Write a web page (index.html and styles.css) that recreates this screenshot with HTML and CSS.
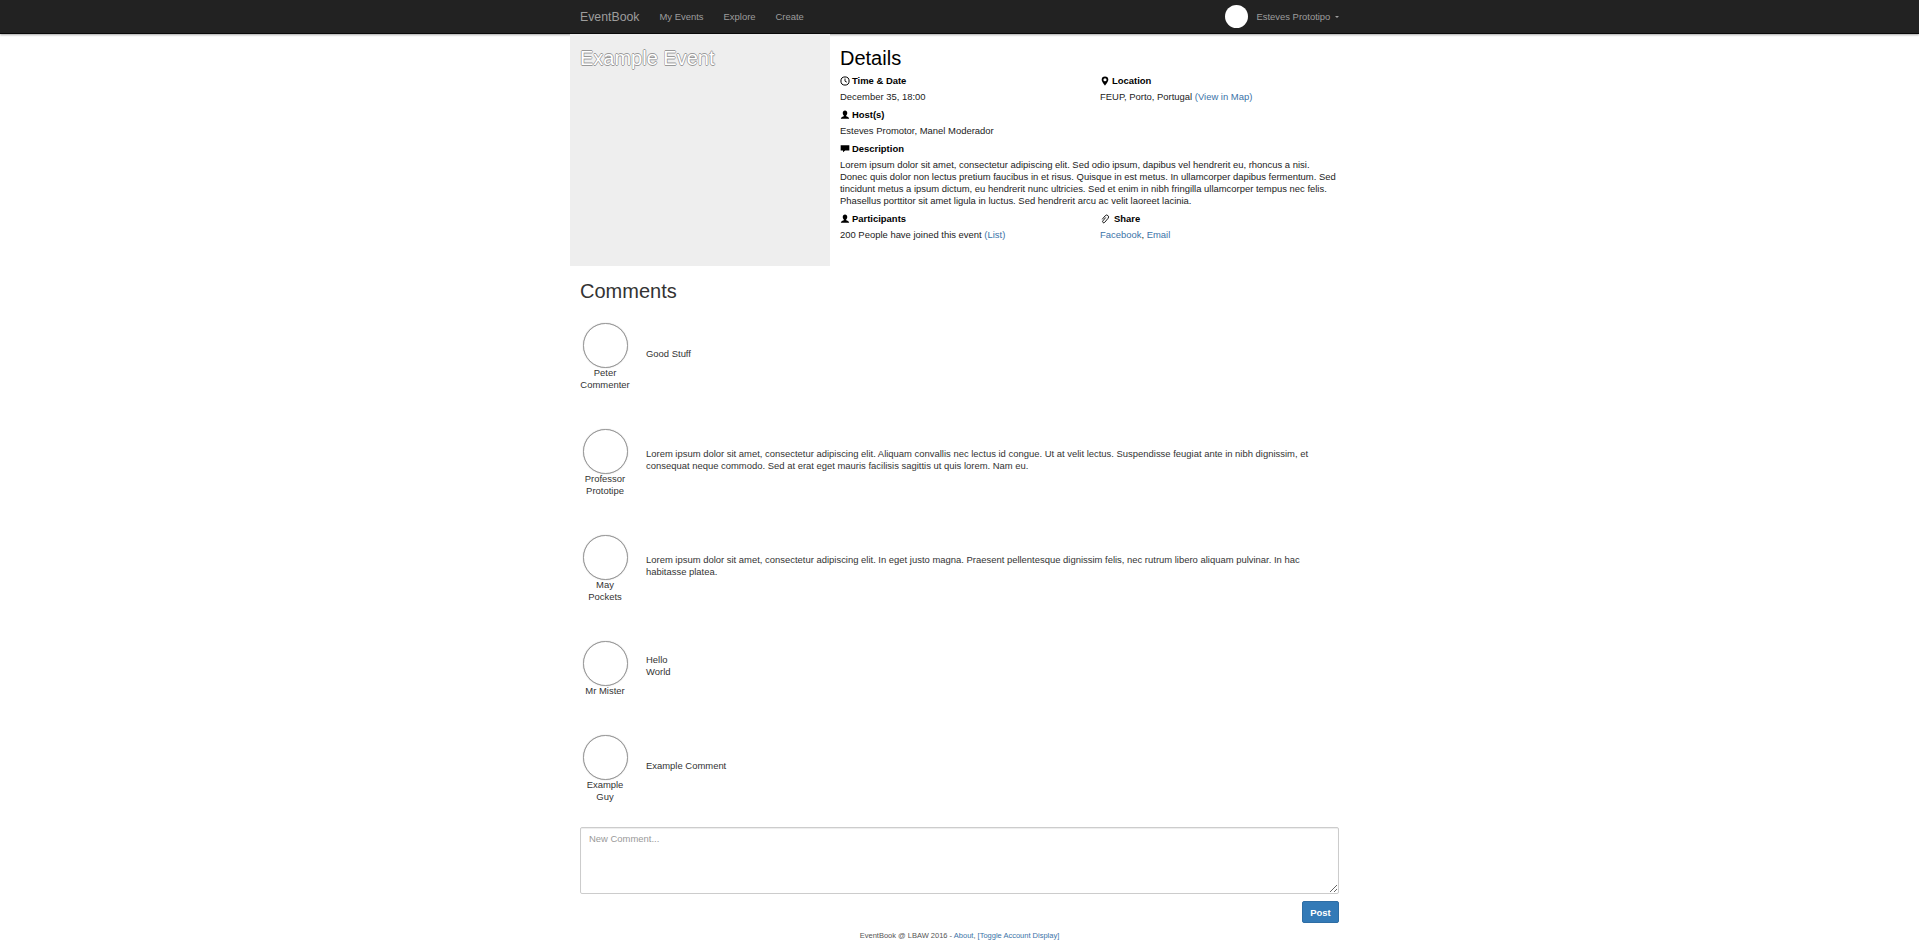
FILE: index.html
```html
<!DOCTYPE html>
<html lang="en">
<head>
    <meta charset="UTF-8">
    <title>EventBook</title>
    <link rel="stylesheet" href="styles.css">
</head>
<body>
    <nav class="navbar">
        <div class="container nav-inner">
            <a class="brand">EventBook</a>
            <a class="nav-link">My Events</a>
            <a class="nav-link">Explore</a>
            <a class="nav-link">Create</a>
            <div class="nav-user">
                <span class="nav-avatar"></span>
                <a class="nav-link">Esteves Prototipo <span class="caret"></span></a>
            </div>
        </div>
    </nav>

    <div class="container">
        <section class="event">
            <div class="hero">
                <h1>Example Event</h1>
            </div>
            <div class="details">
                <h2>Details</h2>
                <div class="info-grid">
                    <div class="info">
                        <h4><svg class="icon" viewBox="0 0 12 12"><circle cx="6" cy="6" r="4.9" fill="none" stroke="#000" stroke-width="1.2"/><path d="M6 3v3.2l2.2 1.2" fill="none" stroke="#000" stroke-width="1.1"/></svg>Time &amp; Date</h4>
                        <p>December 35, 18:00</p>
                    </div>
                    <div class="info">
                        <h4><svg class="icon" viewBox="0 0 12 12"><path fill-rule="evenodd" d="M6 .5a4 4 0 0 0-4 4c0 2.6 4 7 4 7s4-4.400 4-7a4 4 0 0 0-4-4zm0 2.100a1.900 1.900 0 1 1 0 3.800 1.900 1.900 0 0 1 0-3.800z"/></svg>Location</h4>
                        <p>FEUP, Porto, Portugal <a>(View in Map)</a></p>
                    </div>
                    <div class="info wide">
                        <h4><svg class="icon" viewBox="0 0 12 12"><path d="M6 .6c1.700 0 2.700 1.300 2.700 3 0 1.300-.6 2.500-1.300 3.100v.9c1 .5 3.600 1 3.600 2.900H1c0-1.900 2.600-2.400 3.600-2.900v-.9C3.900 6.100 3.300 4.900 3.300 3.600c0-1.700 1-3 2.700-3z"/></svg>Host(s)</h4>
                        <p>Esteves Promotor, Manel Moderador</p>
                    </div>
                    <div class="info wide">
                        <h4><svg class="icon" viewBox="0 0 12 12"><path d="M.8 1.500h10.400v6.400H6.200L3.600 10V7.900H.8z"/></svg>Description</h4>
                        <p>Lorem ipsum dolor sit amet, consectetur adipiscing elit. Sed odio ipsum, dapibus vel hendrerit eu, rhoncus a nisi. Donec quis dolor non lectus pretium faucibus in et risus. Quisque in est metus. In ullamcorper dapibus fermentum. Sed tincidunt metus a ipsum dictum, eu hendrerit nunc ultricies. Sed et enim in nibh fringilla ullamcorper tempus nec felis. Phasellus porttitor sit amet ligula in luctus. Sed hendrerit arcu ac velit laoreet lacinia.</p>
                    </div>
                    <div class="info">
                        <h4><svg class="icon" viewBox="0 0 12 12"><path d="M6 .6c1.700 0 2.700 1.300 2.700 3 0 1.300-.6 2.500-1.300 3.100v.9c1 .5 3.600 1 3.600 2.900H1c0-1.900 2.600-2.400 3.600-2.900v-.9C3.900 6.100 3.300 4.900 3.300 3.600c0-1.700 1-3 2.700-3z"/></svg>Participants</h4>
                        <p>200 People have joined this event <a>(List)</a></p>
                    </div>
                    <div class="info">
                        <h4><svg class="icon clip" viewBox="0 0 12 12"><path transform="rotate(40 6 6)" d="M3.700 8.500V2.900a2.300 2.300 0 0 1 4.600 0v6.500a1.400 1.400 0 0 1-2.800 0V4" fill="none" stroke="#000" stroke-width="1"/></svg>Share</h4>
                        <p><a>Facebook</a>, <a>Email</a></p>
                    </div>
                </div>
            </div>
        </section>

        <section class="comments">
            <h3>Comments</h3>

            <div class="comment">
                <div class="author"><span class="avatar"></span><span class="name">Peter Commenter</span></div>
                <p class="body">Good Stuff</p>
            </div>
            <div class="comment">
                <div class="author"><span class="avatar"></span><span class="name">Professor Prototipe</span></div>
                <p class="body">Lorem ipsum dolor sit amet, consectetur adipiscing elit. Aliquam convallis nec lectus id congue. Ut at velit lectus. Suspendisse feugiat ante in nibh dignissim, et consequat neque commodo. Sed at erat eget mauris facilisis sagittis ut quis lorem. Nam eu.</p>
            </div>
            <div class="comment">
                <div class="author"><span class="avatar"></span><span class="name">May Pockets</span></div>
                <p class="body">Lorem ipsum dolor sit amet, consectetur adipiscing elit. In eget justo magna. Praesent pellentesque dignissim felis, nec rutrum libero aliquam pulvinar. In hac habitasse platea.</p>
            </div>
            <div class="comment">
                <div class="author"><span class="avatar"></span><span class="name">Mr Mister</span></div>
                <p class="body">Hello<br>World</p>
            </div>
            <div class="comment">
                <div class="author"><span class="avatar"></span><span class="name">Example Guy</span></div>
                <p class="body">Example Comment</p>
            </div>

            <form class="new-comment">
                <textarea placeholder="New Comment..."></textarea>
                <button type="button">Post</button>
            </form>
        </section>

        <footer>EventBook @ LBAW 2016 - <a>About</a>, <a>[Toggle Account Display]</a></footer>
    </div>
</body>
</html>
```

FILE: styles.css
```css
* { box-sizing: border-box; }
html, body { height: 100%; }
body { margin: 0; font-family: "Liberation Sans", Arial, sans-serif; font-size: 9.45px; line-height: 12px; color: #333; background: #fff; overflow: hidden; }
a { color: #3b73a8; text-decoration: none; }
.container { width: 779px; margin: 0 auto; }

.navbar { height: 34px; background: #222; border-bottom: 1px solid #080808; box-shadow: 0 1px 2px rgba(0,0,0,0.35); }
.nav-inner { display: flex; align-items: center; height: 33px; padding: 0 10px; }
.brand { font-size: 12.3px; color: #9d9d9d; margin-right: 20px; }
.nav-link { color: #9d9d9d; margin-right: 20px; }
.nav-user { margin-left: auto; display: flex; align-items: center; }
.nav-avatar { width: 23px; height: 23px; border-radius: 50%; background: #fff; margin-right: 8px; }
.nav-user .nav-link { margin-right: 0; }
.caret { display: inline-block; width: 0; height: 0; margin-left: 2px; vertical-align: middle; border-top: 2px solid; border-left: 2px solid transparent; border-right: 2px solid transparent; }

.event { display: flex; height: 232px; }
.hero { width: 260px; background: #eee; padding: 10px; }
.hero h1 { margin: 0; font-size: 20px; font-weight: 400; line-height: 28px; color: #fff; text-shadow: -.7px 0 #999, .7px 0 #999, 0 -.7px #999, 0 .7px #999; }
.details { flex: 1; padding: 10px 10px 0; min-width: 0; }
.details h2 { margin: 0; height: 28px; font-size: 20px; font-weight: 400; line-height: 28px; color: #000; }
.info-grid { display: grid; grid-template-columns: 260px 1fr; row-gap: 5px; margin-top: 2px; }
.info.wide { grid-column: 1 / -1; }
.info h4 { margin: 0 0 3px; display: flex; align-items: center; font-size: 9.45px; line-height: 14px; font-weight: 700; color: #000; }
.info p { margin: 0; color: #222; }
.icon { width: 10px; height: 10px; margin-right: 2px; flex: none; }
.icon.clip { margin-right: 4px; }

.comments { padding: 0 10px; }
.comments h3 { margin: 11px 0 17px; font-size: 20px; font-weight: 400; line-height: 28px; color: #333; }
.comment { display: flex; align-items: center; margin-bottom: 37px; }
.comment:last-of-type { margin-bottom: 24px; }
.author { width: 50px; flex: none; display: flex; flex-direction: column; align-items: center; text-align: center; }
.avatar { width: 45px; height: 45px; margin-top: 1px; border-radius: 50%; border: 1px solid #999; box-shadow: 0 0 1px #999; background: #fff; }
.name { margin-top: -1px; padding: 0 3px; }
.body { margin: -6px 0 0 16px; color: #333; }

.new-comment { display: flex; flex-direction: column; align-items: flex-end; }
textarea { display: block; width: 100%; height: 67px; padding: 5px 8px; border: 1px solid #ccc; border-radius: 2px; font: inherit; color: #555; box-shadow: inset 0 1px 1px rgba(0,0,0,0.075); }
textarea::placeholder { color: #999; }
button { margin-top: 7px; width: 37px; height: 22px; padding: 0; background: #337ab7; color: #fff; border: 1px solid #2e6da4; border-radius: 2px; font: 700 9.45px "Liberation Sans", Arial, sans-serif; }

footer { margin-top: 8px; text-align: center; font-size: 7.5px; line-height: 10px; color: #555; }
```
